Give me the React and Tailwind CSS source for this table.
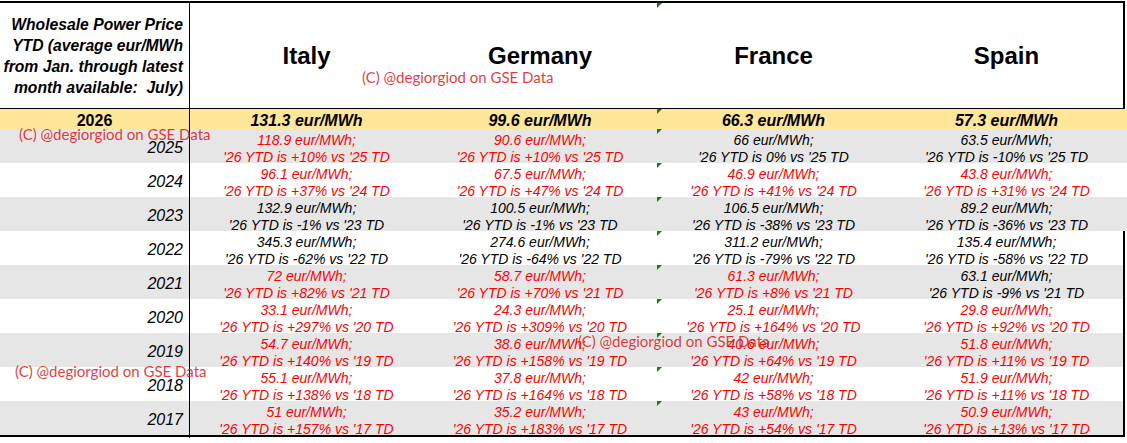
import React from 'react';

// one entry per country: [price, change vs that year, red?]
const rows = [
  { year: '2025', cells: [['118.9', '+10%', true], ['90.6', '+10%', true], ['66', '0%', false], ['63.5', '-10%', false]] },
  { year: '2024', cells: [['96.1', '+37%', true], ['67.5', '+47%', true], ['46.9', '+41%', true], ['43.8', '+31%', true]] },
  { year: '2023', cells: [['132.9', '-1%', false], ['100.5', '-1%', false], ['106.5', '-38%', false], ['89.2', '-36%', false]] },
  { year: '2022', cells: [['345.3', '-62%', false], ['274.6', '-64%', false], ['311.2', '-79%', false], ['135.4', '-58%', false]] },
  { year: '2021', cells: [['72', '+82%', true], ['58.7', '+70%', true], ['61.3', '+8%', true], ['63.1', '-9%', false]] },
  { year: '2020', cells: [['33.1', '+297%', true], ['24.3', '+309%', true], ['25.1', '+164%', true], ['29.8', '+92%', true]] },
  { year: '2019', cells: [['54.7', '+140%', true], ['38.6', '+158%', true], ['40.6', '+64%', true], ['51.8', '+11%', true]] },
  { year: '2018', cells: [['55.1', '+138%', true], ['37.8', '+164%', true], ['42', '+58%', true], ['51.9', '+11%', true]] },
  { year: '2017', cells: [['51', '+157%', true], ['35.2', '+183%', true], ['43', '+54%', true], ['50.9', '+13%', true]] },
];

const countries = ['Italy', 'Germany', 'France', 'Spain'];
const current = ['131.3', '99.6', '66.3', '57.3'];

const cols = 'grid grid-cols-[190px_233px_234px_233px_233px]';

// little green excel marker in the corner of a cell
function Marker() {
  return <div className="absolute top-0 left-0 w-[5px] h-[5px] bg-[#1e7a1e] [clip-path:polygon(0_0,100%_0,0_100%)]" />;
}

function Watermark({ className }) {
  return (
    <div className={'absolute whitespace-nowrap font-[Lato,sans-serif] text-[15px] leading-[18px] text-[rgba(225,20,20,0.85)] ' + className}>
      (C) @degiorgiod on GSE Data
    </div>
  );
}

export default function App() {
  return (
    <div className="relative w-[1127px] h-[443px] bg-white overflow-hidden pt-[1px] font-['Liberation_Sans',Arial,sans-serif] text-black">
      {/* header */}
      <div className={cols + ' w-[1125px] h-[108px] border-t-2 border-b border-r-2 border-black'}>
        <div className="border-r border-black flex items-center justify-end pr-[6px]">
          <div className="text-right italic font-bold text-[15.7px] leading-[21px] whitespace-nowrap">
            Wholesale Power Price<br />
            YTD (average eur/MWh<br />
            from Jan. through latest<br />
            month available:&nbsp; July)
          </div>
        </div>
        {countries.map((c, i) => (
          <div key={c} className="relative flex items-center justify-center text-[24px] font-bold">
            {i === 2 && <Marker />}
            {c}
          </div>
        ))}
      </div>

      {/* current year */}
      <div className={cols + ' w-full h-[20px] bg-[#ffe699]'}>
        <div className="border-r border-black flex items-center justify-center text-[16px] font-bold">2026</div>
        {current.map((v, i) => (
          <div key={i} className="relative flex items-center justify-center text-[16px] font-bold italic">
            {i === 2 && <Marker />}
            {v} eur/MWh
          </div>
        ))}
      </div>

      {rows.map((r, idx) => {
        const yy = r.year.slice(2);
        const bg = idx % 2 === 0 ? 'bg-[#e7e6e6]' : 'bg-white';
        const edge = idx >= 3 ? ' w-[1125px] border-r-2 border-black' : ' w-full';
        const last = idx === rows.length - 1 ? ' h-[36px] border-b-2 border-black' : ' h-[34px]';
        return (
          <div key={r.year} className={cols + ' ' + bg + edge + last}>
            <div className="border-r border-black flex items-center justify-end pr-[6px] text-[16px] italic">{r.year}</div>
            {r.cells.map(([price, pct, red], i) => (
              <div
                key={i}
                className={'relative flex flex-col items-center justify-center pt-[3px] text-[14px] leading-[17px] italic whitespace-nowrap ' + (red ? 'text-[#ff0000]' : 'text-black')}
              >
                {i === 2 && <Marker />}
                <span>{price} eur/MWh;</span>
                <span>'26 YTD is {pct} vs '{yy} TD</span>
              </div>
            ))}
          </div>
        );
      })}

      <Watermark className="left-[362px] top-[68px]" />
      <Watermark className="left-[19px] top-[125px]" />
      <Watermark className="left-[578px] top-[332px]" />
      <Watermark className="left-[15px] top-[362px]" />
    </div>
  );
}
